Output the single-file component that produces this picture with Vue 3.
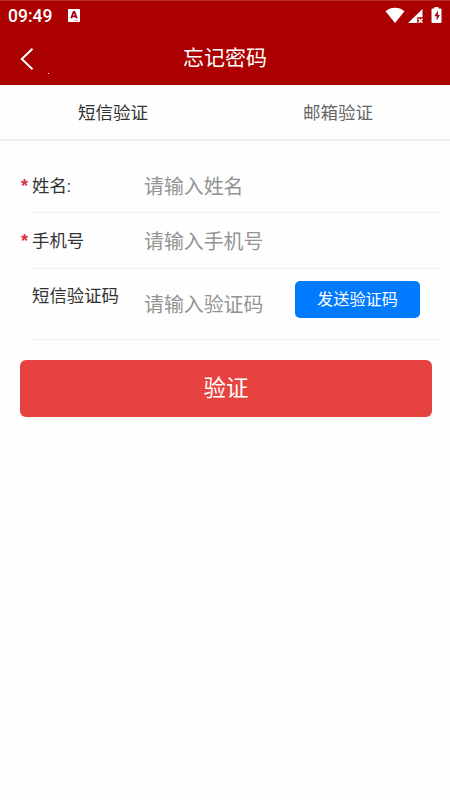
<script setup>
import { ref } from 'vue'

const tabs = ['短信验证', '邮箱验证']
const active = ref(0)
const fields = [
  { label: '姓名:', hint: '请输入姓名', required: true, kind: 'name' },
  { label: '手机号', hint: '请输入手机号', required: true, kind: 'phone' },
  { label: '短信验证码', hint: '请输入验证码', required: false, kind: 'code' },
]
</script>

<template>
  <div class="screen">
    <header class="top">
      <div class="status">
        <span class="clock">09:49</span>
        <svg class="app-icon" width="12" height="13" viewBox="0 0 12 13">
          <rect width="12" height="13" rx="1" fill="#fff" />
          <path d="M3.200 9.300 5.600 2.800h.8L8.800 9.300M4.100 7.300h3.800" fill="none" stroke="#a00010" stroke-width="1.800" />
          <path d="M6 11.400h4" stroke="#d99" stroke-width=".8" />
        </svg>
        <svg class="signals" width="60" height="20" viewBox="0 0 60 20">
          <path d="M.5 4.300C6-.3 14-.3 19.500 4.300L10 16Z" fill="#fff" />
          <path d="M37.500 2v8.200h-5.300V16H23Z" fill="#fff" />
          <path d="m33.500 11.700 4 4m0-4-4 4" stroke="#fff" stroke-width="1.500" />
          <path d="M49.500 0h4v1.500h2q1 0 1 1V15q0 1-1 1h-8q-1 0-1-1V2.500q0-1 1-1h2Z" fill="#fff" />
          <path d="m53 3.500-3.700 5.800h2.400V13.500l3.200-5.500h-2Z" fill="#a00010" />
        </svg>
      </div>
      <div class="nav">
        <svg class="back" width="14" height="24" viewBox="0 0 14 24">
          <path d="M12.500 1.800 1.800 12l10.700 10.200" fill="none" stroke="#fff" stroke-width="2" />
        </svg>
        <i class="speck"></i>
        <h1>忘记密码</h1>
      </div>
    </header>

    <nav class="tabs">
      <div
        v-for="(tab, i) in tabs"
        :key="tab"
        class="tab"
        :class="{ active: active === i }"
        @click="active = i"
      >{{ tab }}</div>
    </nav>

    <main class="form">
      <div v-for="f in fields" :key="f.kind" class="row" :class="f.kind">
        <span class="star">{{ f.required ? '*' : '' }}</span>
        <div class="cell">
          <span class="label">{{ f.label }}</span>
          <span class="hint">{{ f.hint }}</span>
          <button v-if="f.kind === 'code'" class="send">发送验证码</button>
        </div>
      </div>
      <button class="submit">验证</button>
    </main>
  </div>
</template>

<style>
body {
  background: #fff;
}
</style>

<style scoped>
.screen {
  width: 450px;
  height: 800px;
  overflow: hidden;
  background: #fefefe;
  font-family: Roboto, "Noto Sans CJK SC", sans-serif;
  color: #333;
}
.top {
  height: 85px;
  box-sizing: border-box;
  background: #ab0000;
  border-top: 1px solid #b72b2b;
  color: #fff;
}
.status {
  display: flex;
  height: 29px;
  align-items: center;
  padding: 0 5px 0 8px;
}
.clock {
  padding-top: 2px;
  font-size: 17.500px;
  font-weight: 500;
  line-height: 29px;
  width: 60px;
}
.signals {
  margin: 2px 0 0 auto;
}
.nav {
  display: flex;
  align-items: center;
  height: 56px;
  padding: 0 20px;
}
.back {
  margin-top: 1px;
}
.speck {
  width: 1px;
  height: 1px;
  margin: 30px 0 0 14px;
  background: #fff;
}
h1 {
  margin: 0 auto;
  padding-right: 29px;
  font-size: 21px;
  line-height: 30px;
  font-weight: 400;
}
.tabs {
  display: flex;
  height: 56px;
  box-sizing: border-box;
  border-bottom: 2px solid #efefef;
}
.tab {
  flex: 1;
  padding-left: 1px;
  text-align: center;
  font-size: 17.500px;
  line-height: 56px;
  color: #666;
}
.tab.active {
  color: #333;
}
.form {
  padding: 16px 10px 0 20px;
}
.row {
  display: flex;
  height: 56px;
}
.star {
  width: 11px;
  padding-left: 1px;
  font-family: "Liberation Sans", sans-serif;
  font-size: 18px;
  font-weight: 700;
  line-height: 57px;
  color: #dd3045;
}
.cell {
  flex: 1;
  display: flex;
  box-sizing: border-box;
  border-bottom: 1px solid #f3f3f3;
}
.label {
  width: 112px;
  font-size: 17.400px;
  line-height: 56px;
}
.hint {
  width: 151px;
  font-size: 19.900px;
  line-height: 60px;
  color: #949494;
}
.name .star {
  line-height: 59px;
}
.name .label {
  line-height: 58px;
}
.name .hint {
  line-height: 62px;
}
.code {
  height: 71px;
}
.code .label {
  line-height: 55px;
}
.code .hint {
  line-height: 74px;
}
.send,
.submit {
  border: 0;
  padding: 0;
  color: #fff;
  font-family: inherit;
}
.send {
  width: 125px;
  height: 37px;
  margin-top: 12px;
  border-radius: 5px;
  background: #007aff;
  font-size: 16.200px;
  line-height: 34px;
}
.submit {
  display: block;
  width: 412px;
  height: 57px;
  margin-top: 20px;
  border-radius: 6px;
  background: #e64340;
  font-size: 22.500px;
  line-height: 57px;
}
</style>
